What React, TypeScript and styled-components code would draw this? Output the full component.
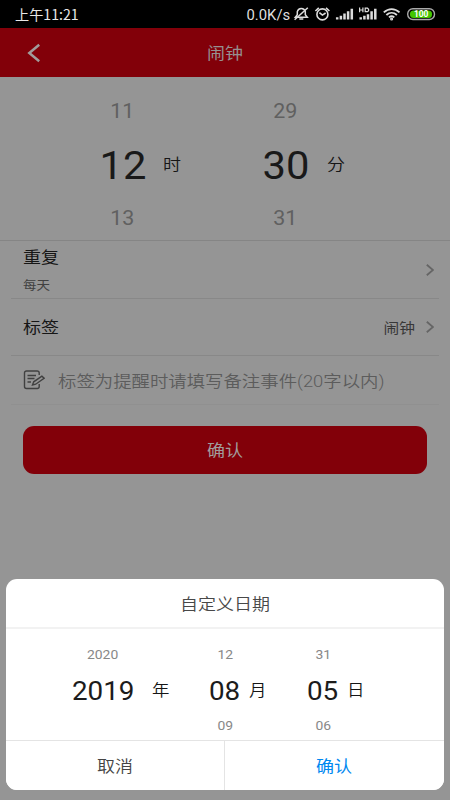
import React from "react";
import styled, { createGlobalStyle } from "styled-components";

const GlobalStyle = createGlobalStyle`
  * { box-sizing: border-box; }
  body { margin: 0; background: #959595; }
`;

const Screen = styled.main`
  position: relative;
  width: 450px;
  height: 800px;
  overflow: hidden;
  background: #959595;
  font-family: Roboto, "Noto Sans CJK SC", sans-serif;
  color: #161616;
`;

/* Glyphs are drawn a little wider than they are tall. */
const Text = styled.span<{
  $size: number;
  $color?: string;
  $weight?: number;
  $origin?: string;
  $stretch?: number;
  $shift?: number;
}>`
  display: block;
  white-space: nowrap;
  font-size: ${(p) => p.$size}px;
  line-height: 1;
  font-weight: ${(p) => p.$weight ?? 400};
  color: ${(p) => p.$color ?? "inherit"};
  transform-origin: ${(p) => p.$origin ?? "center"};
  transform: translateY(${(p) => p.$shift ?? 1}px) scaleX(${(p) => p.$stretch ?? 1.125});
`;

const StatusBar = styled.header`
  display: flex;
  align-items: center;
  justify-content: space-between;
  height: 28px;
  padding: 0 14px 0 15px;
  background: #000;
`;

const Clock = styled(Text)`
  font-family: "Noto Sans CJK SC", sans-serif;
`;

const StatusIcons = styled.svg`
  display: block;
  width: 145px;
  height: 28px;
`;

const StatusGroup = styled.div`
  display: flex;
  align-items: center;
  gap: 1px;
`;

const TitleBar = styled.nav`
  display: grid;
  grid-template-columns: 68px 1fr 68px;
  align-items: center;
  justify-items: center;
  height: 49px;
  background: #820009;
`;

const BackIcon = styled.svg`
  width: 14px;
  height: 20px;
`;

const TimePicker = styled.section`
  display: grid;
  grid-template-columns: 49px 50px 64px 49px 52px;
  grid-template-rows: repeat(3, 53.5px);
  height: 164px;
  padding: 7.5px 0 0 98px;
  border-bottom: 1px solid #858585;
`;

const Cell = styled.div<{ $column: number; $row: number }>`
  display: flex;
  grid-column: ${(p) => p.$column};
  grid-row: ${(p) => p.$row};
  align-items: center;
  justify-content: center;
`;

const Row = styled.div<{ $height: number; $faint?: boolean }>`
  display: flex;
  align-items: center;
  justify-content: space-between;
  height: ${(p) => p.$height}px;
  margin: 0 11px;
  padding: 0 5px 0 12px;
  border-bottom: 1px solid ${(p) => (p.$faint ? "#909090" : "#888")};
`;

const Stack = styled.div`
  display: flex;
  flex-direction: column;
  gap: 14px;
`;

const RowEnd = styled.div`
  display: flex;
  align-items: center;
  gap: 11px;
`;

const ChevronIcon = styled.svg`
  width: 8px;
  height: 12px;
`;

const NoteRow = styled(Row)`
  justify-content: flex-start;
  gap: 13px;
`;

const NoteIcon = styled.svg`
  width: 22px;
  height: 20px;
`;

const ConfirmButton = styled.button`
  display: flex;
  align-items: center;
  justify-content: center;
  width: 404px;
  height: 48px;
  margin: 21px 0 0 23px;
  padding: 0;
  border: 0;
  border-radius: 11px;
  background: #820009;
  font-family: inherit;
`;

const Sheet = styled.section`
  position: absolute;
  left: 6px;
  right: 6px;
  top: 579px;
  height: 210.5px;
  overflow: hidden;
  border-radius: 11px;
  background: #fff;
`;

const SheetTitle = styled.div`
  display: flex;
  align-items: center;
  justify-content: center;
  height: 50px;
  border-bottom: 2px solid #f2f2f2;
`;

const DatePicker = styled.div`
  display: grid;
  grid-template-columns: 72px 44px 23px 38px 28px 32px 38px 28px;
  grid-template-rows: 35.5px 36px 35px;
  height: 112px;
  padding: 7.5px 0 0 61px;
  border-bottom: 1px solid #e4e4e4;
`;

const SheetActions = styled.div`
  display: grid;
  grid-template-columns: 219px 1fr;
  height: 48.5px;
`;

const ActionButton = styled.button<{ $divided?: boolean }>`
  display: flex;
  align-items: center;
  justify-content: center;
  padding: 0;
  border: 0;
  border-right: ${(p) => (p.$divided ? "1px solid #e4e4e4" : "0")};
  background: #fff;
  font-family: inherit;
`;

const Chevron = () => (
  <ChevronIcon viewBox="0 0 8 12" fill="none" stroke="#656565" strokeWidth="1.8">
    <path d="M.8.7 7 6 .8 11.3" />
  </ChevronIcon>
);

const timeCells = [
  { column: 1, values: ["11", "12", "13"], unit: "时" },
  { column: 4, values: ["29", "30", "31"], unit: "分" },
];

const dateCells = [
  { column: 1, values: ["2020", "2019", ""], unit: "年" },
  { column: 4, values: ["12", "08", "09"], unit: "月" },
  { column: 7, values: ["31", "05", "06"], unit: "日" },
];

const timeShifts = [-0.3, 2, 0.4];

export default function App() {
  return (
    <>
      <GlobalStyle />
      <Screen>
        <StatusBar>
          <Clock $size={14} $color="#e8e8e8" $origin="left" $stretch={1.01} $shift={0}>
            上午11:21
          </Clock>
          <StatusGroup>
            <Text $size={14} $color="#dedede" $origin="right" $stretch={1.06} $shift={1}>
              0.0K/s
            </Text>
            <StatusIcons viewBox="291 0 145 28" fill="none" stroke="#ddd">
              <g strokeWidth="1.5">
                <path d="M295.3 17.3h12l-2-2.6v-3a4.1 4.1 0 0 0-8 0v3zM299.3 19h4" />
                <path d="M307.8 7.8 294.6 19.8" />
              </g>
              <g strokeWidth="1.6">
                <circle cx="322.4" cy="14.4" r="5.5" />
                <path d="m319.4 12.6 3 2.5 3.2-2.1M315.4 11l3.4-3.1M329.4 11 326 7.9" />
              </g>
              <g strokeWidth="2.5">
                <path d="M337.2 19.5v-2.2M340.9 19.5v-3.7M344.5 19.5v-6M348.1 19.5v-8.2M351.8 19.5V8.8" />
                <path d="M360.7 19.5v-2.2M364.4 19.5v-3.7M368 19.5v-5.3M371.6 19.5v-8.2M375.3 19.5V8.8" />
              </g>
              <g strokeWidth="1.2">
                <path d="M359.6 7.6v4.7M362.9 7.6v4.7M359.6 10h3.3M365.2 8.2h2.3l1.1 1v1.5l-1.1 1h-2.3z" />
              </g>
              <g strokeWidth="1.9">
                <path d="M383.8 12.4c4.7-4.4 11-4.4 15.7 0M386.4 15c3.1-2.8 7.4-2.8 10.5 0M389 17.4c1.5-1.3 3.8-1.3 5.3 0" />
                <circle cx="391.6" cy="19" r=".6" />
              </g>
              <rect x="407.7" y="8.7" width="26.8" height="10.8" rx="5.2" stroke="#aaa" strokeWidth="1.4" />
              <rect x="410" y="10.5" width="22" height="7.4" rx="3.5" fill="#43c700" stroke="none" />
              <text
                x="421.2"
                y="17.2"
                fill="#fff"
                stroke="none"
                textAnchor="middle"
                fontSize="8.5"
                fontWeight="700"
                textLength="14.5"
                lengthAdjust="spacingAndGlyphs"
              >
                100
              </text>
            </StatusIcons>
          </StatusGroup>
        </StatusBar>

        <TitleBar>
          <BackIcon viewBox="0 0 14 20" fill="none" stroke="#a19b9b" strokeWidth="2.5">
            <path d="M12.2 1.8 2.3 10l9.9 8.2" />
          </BackIcon>
          <Text $size={16} $color="#969090">闹钟</Text>
        </TitleBar>

        <TimePicker>
          {timeCells.map(({ column, values, unit }) => (
            <React.Fragment key={unit}>
              {values.map((value, i) => (
                <Cell key={value} $column={column} $row={i + 1}>
                  <Text
                    $size={i === 1 ? 39 : 20}
                    $color={i === 1 ? "#191919" : "#606060"}
                    $stretch={1.07}
                    $shift={timeShifts[i]}
                  >
                    {value}
                  </Text>
                </Cell>
              ))}
              <Cell $column={column + 1} $row={2}>
                <Text $size={16} $weight={350} $shift={0.4}>{unit}</Text>
              </Cell>
            </React.Fragment>
          ))}
        </TimePicker>

        <Row $height={58}>
          <Stack>
            <Text $size={16} $origin="left">重复</Text>
            <Text $size={12} $color="#404040" $origin="left">每天</Text>
          </Stack>
          <Chevron />
        </Row>
        <Row $height={57}>
          <Text $size={16} $origin="left">标签</Text>
          <RowEnd>
            <Text $size={14} $color="#383838" $origin="right">闹钟</Text>
            <Chevron />
          </RowEnd>
        </Row>
        <NoteRow $height={49} $faint>
          <NoteIcon viewBox="0 0 22 20" fill="none" stroke="#404040" strokeWidth="1.4">
            <path d="M16.2 5V3a2 2 0 0 0-2-2H3.5a2 2 0 0 0-2 2v13.5a2 2 0 0 0 2 2h10.7a2 2 0 0 0 2-2V14M4.5 5.5h8.5M4.5 8.5h7M4.5 12h3.5" />
            <path d="m9.5 15 1.2-3.2 8.2-5.6 2.2 2-8.4 6z" />
          </NoteIcon>
          <Text $size={16.35} $color="#5c5c5c" $weight={350} $origin="left" $shift={1.5}>
            标签为提醒时请填写备注事件(20字以内)
          </Text>
        </NoteRow>
        <ConfirmButton>
          <Text $size={16} $color="#a19c9c">确认</Text>
        </ConfirmButton>

        <Sheet>
          <SheetTitle>
            <Text $size={16} $color="#484848" $weight={350} $shift={2}>自定义日期</Text>
          </SheetTitle>
          <DatePicker>
            {dateCells.map(({ column, values, unit }) => (
              <React.Fragment key={unit}>
                {values.map((value, i) => (
                  <Cell key={i} $column={column} $row={i + 1}>
                    <Text
                      $size={i === 1 ? 26 : 13}
                      $color={i === 1 ? "#1c1c1c" : "#888"}
                      $stretch={1.07}
                      $shift={i === 1 ? 0.6 : -0.3}
                    >
                      {value}
                    </Text>
                  </Cell>
                ))}
                <Cell $column={column + 1} $row={2}>
                  <Text $size={15.5} $weight={350} $shift={2}>{unit}</Text>
                </Cell>
              </React.Fragment>
            ))}
          </DatePicker>
          <SheetActions>
            <ActionButton $divided>
              <Text $size={16} $color="#444" $weight={350} $shift={2}>取消</Text>
            </ActionButton>
            <ActionButton>
              <Text $size={16} $color="#0088f0" $shift={2}>确认</Text>
            </ActionButton>
          </SheetActions>
        </Sheet>
      </Screen>
    </>
  );
}
